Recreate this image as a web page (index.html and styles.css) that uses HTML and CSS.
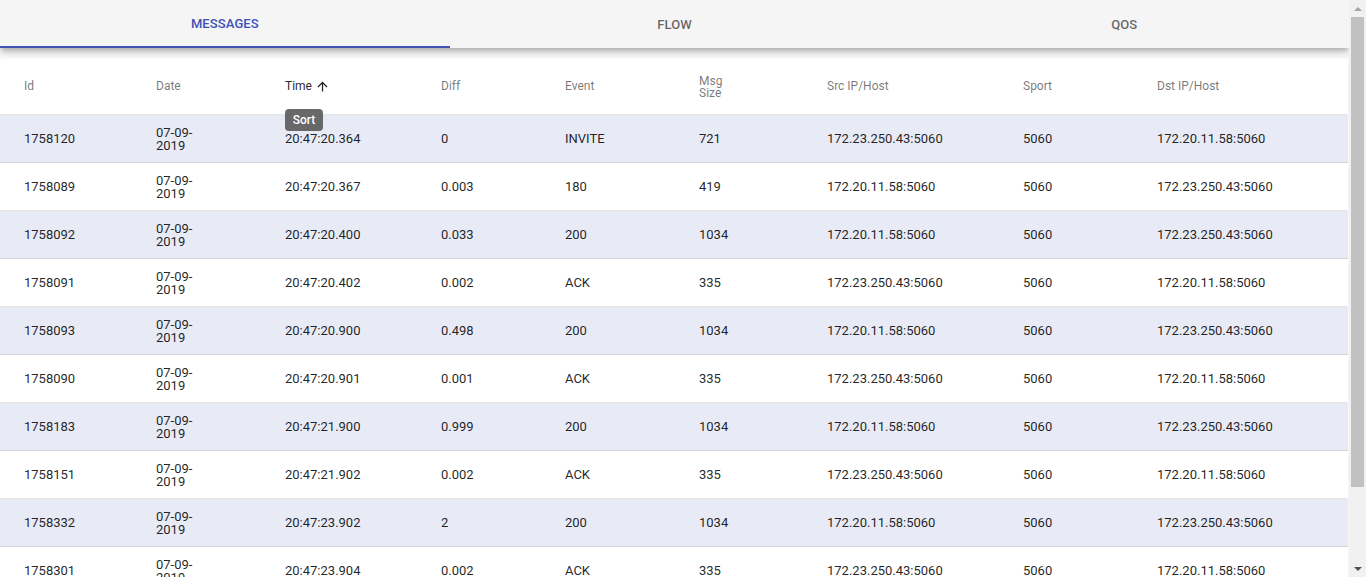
FILE: index.html
```html
<!DOCTYPE html>
<html>
<head>
<meta charset="utf-8">
<link rel="stylesheet" href="styles.css">
</head>
<body>
<div class="page">
  <div class="main">
    <nav class="tabs">
      <div class="tab active">Messages</div>
      <div class="tab">Flow</div>
      <div class="tab">QoS</div>
    </nav>
    <div class="card">
      <div class="row head">
        <div class="cell">Id</div>
        <div class="cell">Date</div>
        <div class="cell sorted">Time
          <svg class="arrow" viewBox="0 0 24 24" width="15" height="15"><path d="M4 12l1.41 1.41L11 7.83V20h2V7.83l5.58 5.59L20 12l-8-8-8 8z"/></svg>
          <span class="tooltip">Sort</span>
        </div>
        <div class="cell">Diff</div>
        <div class="cell">Event</div>
        <div class="cell"><span class="narrow">Msg Size</span></div>
        <div class="cell">Src IP/Host</div>
        <div class="cell">Sport</div>
        <div class="cell">Dst IP/Host</div>
      </div>
      <div class="row odd"><div class="cell">1758120</div><div class="cell"><span class="narrow">07-09-2019</span></div><div class="cell">20:47:20.364</div><div class="cell">0</div><div class="cell">INVITE</div><div class="cell">721</div><div class="cell">172.23.250.43:5060</div><div class="cell">5060</div><div class="cell">172.20.11.58:5060</div></div>
      <div class="row"><div class="cell">1758089</div><div class="cell"><span class="narrow">07-09-2019</span></div><div class="cell">20:47:20.367</div><div class="cell">0.003</div><div class="cell">180</div><div class="cell">419</div><div class="cell">172.20.11.58:5060</div><div class="cell">5060</div><div class="cell">172.23.250.43:5060</div></div>
      <div class="row odd"><div class="cell">1758092</div><div class="cell"><span class="narrow">07-09-2019</span></div><div class="cell">20:47:20.400</div><div class="cell">0.033</div><div class="cell">200</div><div class="cell">1034</div><div class="cell">172.20.11.58:5060</div><div class="cell">5060</div><div class="cell">172.23.250.43:5060</div></div>
      <div class="row"><div class="cell">1758091</div><div class="cell"><span class="narrow">07-09-2019</span></div><div class="cell">20:47:20.402</div><div class="cell">0.002</div><div class="cell">ACK</div><div class="cell">335</div><div class="cell">172.23.250.43:5060</div><div class="cell">5060</div><div class="cell">172.20.11.58:5060</div></div>
      <div class="row odd"><div class="cell">1758093</div><div class="cell"><span class="narrow">07-09-2019</span></div><div class="cell">20:47:20.900</div><div class="cell">0.498</div><div class="cell">200</div><div class="cell">1034</div><div class="cell">172.20.11.58:5060</div><div class="cell">5060</div><div class="cell">172.23.250.43:5060</div></div>
      <div class="row"><div class="cell">1758090</div><div class="cell"><span class="narrow">07-09-2019</span></div><div class="cell">20:47:20.901</div><div class="cell">0.001</div><div class="cell">ACK</div><div class="cell">335</div><div class="cell">172.23.250.43:5060</div><div class="cell">5060</div><div class="cell">172.20.11.58:5060</div></div>
      <div class="row odd"><div class="cell">1758183</div><div class="cell"><span class="narrow">07-09-2019</span></div><div class="cell">20:47:21.900</div><div class="cell">0.999</div><div class="cell">200</div><div class="cell">1034</div><div class="cell">172.20.11.58:5060</div><div class="cell">5060</div><div class="cell">172.23.250.43:5060</div></div>
      <div class="row"><div class="cell">1758151</div><div class="cell"><span class="narrow">07-09-2019</span></div><div class="cell">20:47:21.902</div><div class="cell">0.002</div><div class="cell">ACK</div><div class="cell">335</div><div class="cell">172.23.250.43:5060</div><div class="cell">5060</div><div class="cell">172.20.11.58:5060</div></div>
      <div class="row odd"><div class="cell">1758332</div><div class="cell"><span class="narrow">07-09-2019</span></div><div class="cell">20:47:23.902</div><div class="cell">2</div><div class="cell">200</div><div class="cell">1034</div><div class="cell">172.20.11.58:5060</div><div class="cell">5060</div><div class="cell">172.23.250.43:5060</div></div>
      <div class="row"><div class="cell">1758301</div><div class="cell"><span class="narrow">07-09-2019</span></div><div class="cell">20:47:23.904</div><div class="cell">0.002</div><div class="cell">ACK</div><div class="cell">335</div><div class="cell">172.23.250.43:5060</div><div class="cell">5060</div><div class="cell">172.20.11.58:5060</div></div>
    </div>
  </div>
  <div class="scrollbar">
    <div class="sb-btn"><span class="tri up"></span></div>
    <div class="sb-track"><div class="sb-thumb"></div></div>
    <div class="sb-btn"><span class="tri down"></span></div>
  </div>
</div>
</body>
</html>
```
FILE: styles.css
```css
html, body {
  margin: 0;
  padding: 0;
  height: 577px;
  overflow: hidden;
}
body {
  background: #fafafa;
  font-family: Roboto, "Liberation Sans", sans-serif;
  color: rgba(0,0,0,.87);
}
.page {
  display: flex;
  height: 577px;
}
.main {
  flex: 1;
  min-width: 0;
  height: 577px;
  overflow: hidden;
}
.tabs {
  display: flex;
  height: 48px;
  background: #f5f5f5;
  box-shadow: 0 3px 5px -1px rgba(0,0,0,.2), 0 5px 8px 0 rgba(0,0,0,.14), 0 1px 14px 0 rgba(0,0,0,.04);
  position: relative;
  z-index: 2;
}
.tab {
  flex: 1;
  display: flex;
  align-items: center;
  justify-content: center;
  text-transform: uppercase;
  font-size: 13px;
  font-weight: 500;
  letter-spacing: 0.1px;
  color: rgba(0,0,0,.6);
  box-sizing: border-box;
  padding-top: 1px;
}
.tab.active {
  color: #3f51b5;
  border-bottom: 2px solid #3f51b5;
}
.card {
  margin: 10px 1px 0 0;
  background: #fff;
  border-radius: 4px;
  box-shadow: 0 1px 3px rgba(0,0,0,.06);
}
.row {
  display: grid;
  grid-template-columns: 156px 129px 156px 124px 134px 128px 196px 134px 1fr;
  height: 48px;
  border-bottom: 1px solid rgba(0,0,0,.1);
  font-size: 13px;
  box-sizing: border-box;
}
.row.head {
  height: 57px;
  font-size: 12px;
  color: rgba(0,0,0,.54);
  padding-top: 1px;
}
.row.odd {
  background: #e8eaf6;
}
.cell {
  display: flex;
  align-items: center;
  line-height: 13px;
}
.cell:first-child {
  padding-left: 24px;
}
.narrow {
  display: block;
  width: 44px;
}
.head .narrow {
  line-height: 12px;
}
.cell.sorted {
  color: rgba(0,0,0,.87);
  position: relative;
}
.arrow {
  margin-left: 3px;
  fill: rgba(0,0,0,.87);
}
.tooltip {
  position: absolute;
  left: 0;
  top: 50px;
  width: 38px;
  height: 22px;
  background: rgba(97,97,97,.95);
  color: #fff;
  border-radius: 4px;
  font-size: 12px;
  font-weight: 500;
  display: flex;
  align-items: center;
  justify-content: center;
  z-index: 3;
}
.scrollbar {
  width: 17px;
  flex: 0 0 17px;
  background: #f1f1f1;
  display: flex;
  flex-direction: column;
}
.sb-btn {
  height: 17px;
  display: flex;
  align-items: center;
  justify-content: center;
}
.tri {
  width: 0;
  height: 0;
  border-left: 4px solid transparent;
  border-right: 4px solid transparent;
}
.tri.up { border-bottom: 4px solid #a3a3a3; }
.tri.down { border-top: 4px solid #505050; }
.sb-track {
  flex: 1;
  padding: 0 2px;
}
.sb-thumb {
  height: 470px;
  background: #c1c1c1;
}
```
